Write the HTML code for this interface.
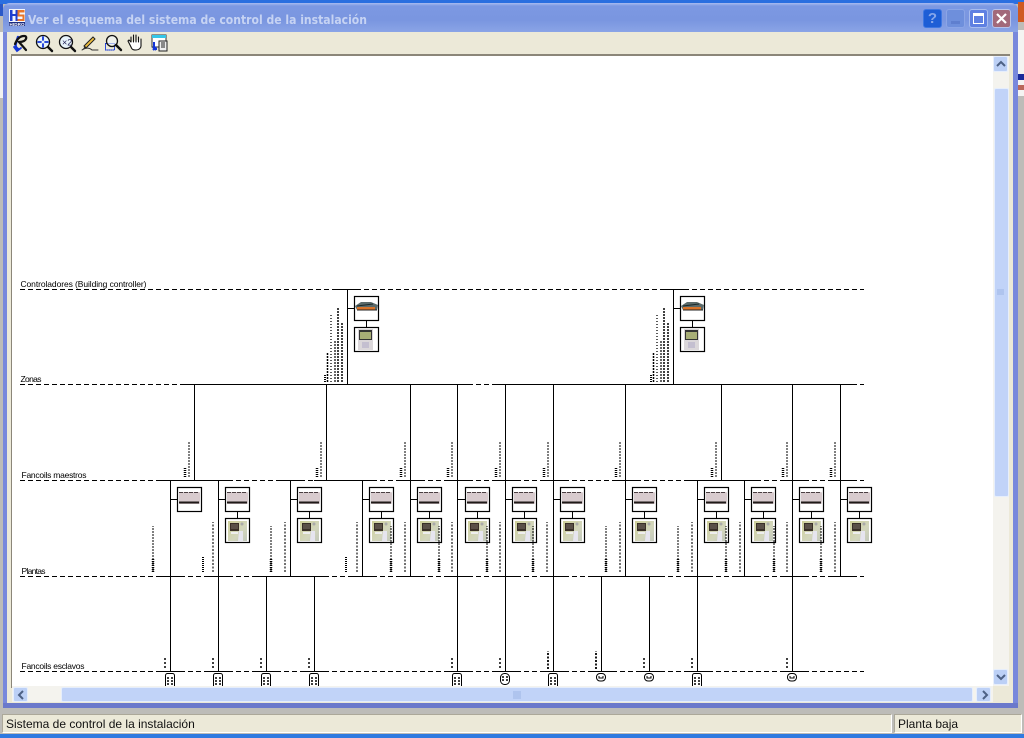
<!DOCTYPE html>
<html><head><meta charset="utf-8"><title>Ver el esquema del sistema de control de la instalación</title>
<style>
html,body{margin:0;padding:0;width:1024px;height:738px;overflow:hidden;background:#bdbcb8;font-family:"Liberation Sans",sans-serif}
.a{position:absolute}
#stage{position:absolute;left:0;top:0;width:1024px;height:738px;overflow:hidden}
.btn{position:absolute;width:19px;height:19px;border-radius:3px;border:1px solid #a9bdee;box-sizing:border-box}
.sb{position:absolute;background:#bcd0f6;border:1px solid #e6eefc;box-sizing:border-box;border-radius:2px}
.panel{position:absolute;top:714px;height:19px;background:#ece9d8;border:1px solid;border-color:#aca899 #fff #fff #aca899;box-sizing:border-box;font-size:12px;line-height:18px;color:#111;padding-left:3px;white-space:nowrap}
</style></head><body>
<div id="stage">
<div class="a" style="left:0;top:0;width:1024px;height:4px;background:#2a6fe0"></div>
<div class="a" style="left:0;top:32px;width:3px;height:66px;background:#f2f2f0"></div>
<div class="a" style="left:1018px;top:30px;width:6px;height:66px;background:#f4f4f2"></div>
<div class="a" style="left:1018px;top:74px;width:6px;height:6px;background:#1a2a9a"></div>
<div class="a" style="left:1018px;top:85px;width:6px;height:5px;background:#b9675a"></div>
<div class="a" style="left:1018px;top:2px;width:6px;height:20px;background:#cf5a22"></div>
<div class="a" style="left:0;top:4px;width:3px;height:12px;background:#2a58c8"></div>

<!-- window -->
<div class="a" style="left:3px;top:3px;width:1015px;height:705px;background:#7888dc;border-radius:7px 7px 0 0"></div>
<div class="a" style="left:3px;top:3px;width:1015px;height:29px;border-radius:7px 7px 0 0;background:linear-gradient(#a8bbf0 0,#7c98e2 3px,#7a96e0 60%,#8aa4e6 100%)"></div>
<div class="a" style="left:7px;top:32px;width:1006px;height:671px;background:#ece9d8"></div>
<div class="a" style="left:3px;top:703px;width:1015px;height:5px;background:#6b79cb"></div>
<div class="a" style="left:11px;top:54px;width:999px;height:2px;background:#8b8679"></div>
<div class="a" style="left:11px;top:54px;width:1px;height:634px;background:#8b8679"></div>
<div class="a" style="left:12px;top:56px;width:981px;height:630px;background:#fff"></div>
<div class="a" style="left:993px;top:56px;width:16px;height:630px;background:#f4f3ee"></div>
<div class="a" style="left:12px;top:686px;width:981px;height:16px;background:#f4f3ee"></div>

<!-- title -->
<svg class="a" style="left:0;top:0" width="1024" height="56" viewBox="0 0 1024 56">
<text x="28" y="24" font-family="'DejaVu Sans',sans-serif" font-weight="700" font-size="12" fill="#c6d3f3" textLength="339" lengthAdjust="spacingAndGlyphs">Ver el esquema del sistema de control de la instalación</text>
<rect x="9" y="9" width="16" height="17" fill="#f4f6fc"/>
<path d="M10 10h2.500v4h3v-4h2v11h-2v-5h-3v5H10z" fill="#1f3fd0"/>
<path d="M17.500 10h7v2.500h-5v2h5V21h-7v-2h5v-2.500h-5z" fill="#e8752a"/>
<rect x="9" y="22" width="16" height="4" fill="#1c2c80"/>
<text x="9.500" y="25.800" font-size="4.500" font-weight="700" fill="#fff" font-family="'Liberation Sans',sans-serif" textLength="15">HIDRO</text>
<!-- toolbar icons -->
<g fill="none" stroke-linecap="round">
<path d="M18 37l-2 6c-1 3 0 5 2 6" stroke="#1436d8" stroke-width="2.400"/>
<path d="M14 47l3 4 4-3" stroke="#1436d8" stroke-width="1.800"/>
<path d="M15 44c2-5 5-8 9-8 3 0 3 3 0 5-2 1-4 1-5 1l7 8" stroke="#111" stroke-width="2.200"/>
<circle cx="43" cy="42" r="6.500" stroke="#111" stroke-width="1.300" fill="#e8f4fb"/>
<path d="M48 47l4 4" stroke="#111" stroke-width="2.400"/>
<path d="M43 37v3M43 44v3M38 42h3M45 42h3" stroke="#1436d8" stroke-width="1.800"/>
<circle cx="66" cy="42" r="6.500" stroke="#111" stroke-width="1.300" fill="#e8f4fb"/>
<path d="M71 47l4 4" stroke="#111" stroke-width="2.400"/>
<path d="M84 46l9-9 2 2-9 9z" stroke="#222" stroke-width="1" fill="#f0c040"/>
<path d="M83 49l2-3 2 2z" fill="#222"/>
<path d="M82 50c4-3 8-2 10 0h6" stroke="#333" stroke-width="1"/>
<rect x="105.500" y="43.500" width="9" height="6.500" stroke="#1436d8" stroke-width="1" stroke-dasharray="1 1"/>
<circle cx="112" cy="41" r="5.500" stroke="#111" stroke-width="1.300" fill="#f4f9fc" fill-opacity=".6"/>
<path d="M116 45l5 5" stroke="#111" stroke-width="2.400"/>
<path d="M131 42v-5M133.500 42v-7M136 42v-7M138.500 42v-5M131 42l-2-2-1 1 3 6c1 3 3 3 5 3 3 0 5-2 5-4v-7" stroke="#111" stroke-width="1.100" fill="#fff"/>
</g>
<rect x="152" y="35" width="14" height="12" fill="#fff" stroke="#333"/>
<rect x="152" y="35" width="14" height="3" fill="#35c6e8"/>
<rect x="159" y="41" width="8" height="10" fill="#eee" stroke="#222"/>
<path d="M161 43h4M161 45h4M161 47h4" stroke="#222"/>
<path d="M154 42v7h3M156 47l-3 3M153 47l3 3" stroke="#1436d8" stroke-width="2" fill="none"/>
<text x="62" y="45.500" font-size="9" fill="#225" font-family="'Liberation Sans',sans-serif">×2</text>
</svg>

<!-- window buttons -->
<div class="btn" style="left:923px;top:9px;background:#1d5ed6;border-color:#3f78e2;color:#86a6ea;font:700 15px/17px 'Liberation Sans',sans-serif;text-align:center">?</div>
<div class="btn" style="left:946px;top:9px;background:#6e8fdc;border-color:#8ba5e6"><div class="a" style="left:4px;top:11px;width:9px;height:3px;background:#5f7fcf"></div></div>
<div class="btn" style="left:969px;top:9px;background:#5f80e2;border-color:#a9bdee"><div class="a" style="left:3px;top:3px;width:11px;height:11px;border:1px solid #fff;border-top-width:3px;box-sizing:border-box"></div></div>
<div class="btn" style="left:992px;top:9px;background:#a2697a;border-color:#b7c3ea"><svg class="a" style="left:2px;top:2px" width="13" height="13"><path d="M2 2l9 9M11 2l-9 9" stroke="#fff" stroke-width="2.200"/></svg></div>

<!-- diagram -->
<svg class="a" style="left:0;top:0" width="1024" height="738" viewBox="0 0 1024 738">
<defs>
<clipPath id="c"><rect x="12" y="56" width="981" height="630"/></clipPath>
<linearGradient id="th" x1="0" y1="0" x2="1" y2="1"><stop offset="0" stop-color="#cfd09a"/><stop offset=".6" stop-color="#d3d6bd"/><stop offset="1" stop-color="#c2c8bb"/></linearGradient>
<g id="m">
<rect x=".5" y=".5" width="24" height="24" fill="#fff" stroke="#000" stroke-width="1.200"/>
<rect x="2" y="5" width="21" height="12" rx="1" fill="#d8cbce"/>
<path d="M2 5.500h20" stroke="#4a3f42" stroke-width="1" stroke-dasharray="4 1"/>
<path d="M2 15.500h20" stroke="#1f1a18" stroke-width="2"/>
</g>
<g id="t">
<rect x=".5" y=".5" width="24" height="24" fill="#fff" stroke="#000" stroke-width="1.200"/>
<rect x="3" y="3" width="19" height="20" fill="url(#th)"/>
<rect x="5" y="5" width="9" height="8" fill="#3a3028"/>
<rect x="6" y="6" width="7" height="5" fill="#5a5048"/>
<path d="M14 13h4v10h-5z" fill="#e6e5ef"/>
<rect x="6" y="14" width="7" height="2" fill="#eee"/>
<circle cx="17" cy="6" r="1.500" fill="#aaa"/>
</g>
<g id="ctl">
<rect x=".5" y=".5" width="24" height="24" fill="#fff" stroke="#000" stroke-width="1.200"/>
<path d="M1 10l6-4h10l7 3-1 5H3z" fill="#5b6a6a"/>
<path d="M3 11h18v3H3z" fill="#d9742a"/>
<path d="M3 10l16-2" stroke="#1a2a2a"/>
<path d="M3 14h20" stroke="#222"/>
</g>
<g id="ts">
<rect x=".5" y=".5" width="24" height="24" fill="#fff" stroke="#000" stroke-width="1.200"/>
<rect x="4" y="2" width="15" height="21" fill="#dbd7da"/>
<rect x="5" y="3" width="13" height="10" fill="#333"/>
<rect x="6" y="5" width="11" height="7" fill="#a8ae76"/>
<rect x="8" y="15" width="7" height="6" fill="#c4bfd0"/>
</g>
<g id="lm" stroke="#000" fill="none">
<path d="M0 0v-36" stroke-width="1" stroke-dasharray="2 1"/>
<path d="M-4 0v-10" stroke-width="2.500" stroke-dasharray="1 1"/>
</g>
<g id="la" stroke="#000" fill="none">
<path d="M0 0v-46" stroke-width="1" stroke-dasharray="2 1"/>
<path d="M0 0v-14" stroke-width="2.500" stroke-dasharray="1 1"/>
</g>
<g id="lb" stroke="#000" fill="none">
<path d="M0 0v-50" stroke-width="1.100" stroke-dasharray="2 1.500"/>
</g>
<g id="lc" stroke="#000" fill="none"><path d="M0 0v-16" stroke-width="2" stroke-dasharray="1 1"/></g>
<g id="le" stroke="#000" fill="none"><path d="M0 0v-12" stroke-width="1.500" stroke-dasharray="2 2"/></g>
<g id="lf" stroke="#000" fill="none"><path d="M0 0v-18" stroke-width="1.800" stroke-dasharray="2 1.500"/></g>
<g id="tag"><rect x="-4.500" y="2.500" width="9" height="16" rx="2" fill="#fff" stroke="#000"/><path d="M-2 6v10M2 6v10" stroke="#000" stroke-width="1.500" stroke-dasharray="2 1"/></g>
<g id="tag2"><rect x="-4.500" y="2.500" width="9" height="11" rx="4" fill="#fff" stroke="#000"/><path d="M-2 5v5M2 5v5" stroke="#000" stroke-width="1.500" stroke-dasharray="2 1"/></g>
<g id="rnd"><rect x="-4.500" y="2.500" width="9" height="7.500" rx="3.500" fill="#fff" stroke="#000"/><path d="M-2 5v2h4V5" stroke="#000" fill="none"/></g>
<g id="zl" stroke="#000" fill="none">
<path d="M338 382v-75" stroke-width="1.500" stroke-dasharray="2 1"/>
<path d="M331 382v-67" stroke-width="1.300" stroke-dasharray="1 2"/>
<path d="M342 382v-59" stroke-width="1.500" stroke-dasharray="2 1"/>
<path d="M335 382v-42" stroke-width="1.200" stroke-dasharray="2 1"/>
<path d="M327.500 382v-30" stroke-width="1.500" stroke-dasharray="2 1"/>
<path d="M325 382v-7" stroke-width="2" stroke-dasharray="1 1"/>
</g>
</defs>
<g clip-path="url(#c)">
<g stroke="#000" fill="none" shape-rendering="crispEdges">
<path d="M20 289.500H864M20 384.500H864M20 480.500H864M20 576.500H864M20 671.500H864" stroke-dasharray="5 3"/>
<path d="M335 289.500h24M661 289.500h24M182 384.500h286M493 384.500h359"/>
<path d="M158 480.500h72M278 480.500h24M314 480.500h60M398 480.500h24M445 480.500h24M493 480.500h24M541 480.500h24M613 480.500h24M685 480.500h71M780 480.500h24M828 480.500h24"/>
<path d="M158 576.500h24M206 576.500h24M254 576.500h72M350 576.500h24M398 576.500h24M445 576.500h24M493 576.500h24M541 576.500h24M589 576.500h72M685 576.500h24M732 576.500h24M780 576.500h24M828 576.500h24"/>
<path d="M158 671.500h24M206 671.500h24M254 671.500h24M302 671.500h24M445 671.500h24M493 671.500h24M541 671.500h24M589 671.500h24M637 671.500h24M685 671.500h24M780 671.500h24"/>
<path d="M347.500 289v96M673.500 289v96"/>
<path d="M194.500 384v96M326.500 384v96M410.500 384v96M457.500 384v96M505.500 384v96M553.500 384v96M625.500 384v96M721.500 384v96M792.500 384v96M840.500 384v96"/>
<path d="M170.500 480v96M218.500 480v96M290.500 480v96M362.500 480v96M410.500 480v96M457.500 480v96M505.500 480v96M553.500 480v96M625.500 480v96M697.500 480v96M744.500 480v96M792.500 480v96M840.500 480v96"/>
<path d="M170.500 576v96M218.500 576v96M266.500 576v96M314.500 576v96M457.500 576v96M505.500 576v96M553.500 576v96M601.500 576v96M649.500 576v96M697.500 576v96M792.500 576v96"/>
<path d="M347 308.500h7M673 308.500h7M366.500 321v6M692.500 321v6"/>
<path d="M170 499.500h7M218 499.500h7M290 499.500h7M362 499.500h7M410 499.500h7M457 499.500h8M505 499.500h7M553 499.500h7M625 499.500h7M697 499.500h7M744 499.500h7M792 499.500h7M840 499.500h7"/>
<path d="M237.500 512v6M309.500 512v6M381.500 512v6M429.500 512v6M477.500 512v6M524.500 512v6M572.500 512v6M644.500 512v6M716.500 512v6M763.500 512v6M811.500 512v6M859.500 512v6"/>
</g>
<g font-family="'Liberation Sans',sans-serif" font-size="8.500" fill="#000" style="white-space:pre">
<text x="20.500" y="287" textLength="126" lengthAdjust="spacing">Controladores  (Building  controller)</text>
<text x="20.500" y="382" textLength="21" lengthAdjust="spacing">Zonas</text>
<text x="21.500" y="478" textLength="65" lengthAdjust="spacing">Fancoils  maestros</text>
<text x="21.500" y="574" textLength="24" lengthAdjust="spacing">Plantas</text>
<text x="21.500" y="669" textLength="63" lengthAdjust="spacing">Fancoils  esclavos</text>
</g>
<use href="#ctl" x="354" y="296"/><use href="#ts" x="354" y="327"/>
<use href="#ctl" x="680" y="296"/><use href="#ts" x="680" y="327"/>
<use href="#zl"/><use href="#zl" x="326"/>
<use href="#m" x="177" y="487"/>
<use href="#m" x="225" y="487"/><use href="#t" x="225" y="518"/>
<use href="#m" x="297" y="487"/><use href="#t" x="297" y="518"/>
<use href="#m" x="369" y="487"/><use href="#t" x="369" y="518"/>
<use href="#m" x="417" y="487"/><use href="#t" x="417" y="518"/>
<use href="#m" x="465" y="487"/><use href="#t" x="465" y="518"/>
<use href="#m" x="512" y="487"/><use href="#t" x="512" y="518"/>
<use href="#m" x="560" y="487"/><use href="#t" x="560" y="518"/>
<use href="#m" x="632" y="487"/><use href="#t" x="632" y="518"/>
<use href="#m" x="704" y="487"/><use href="#t" x="704" y="518"/>
<use href="#m" x="751" y="487"/><use href="#t" x="751" y="518"/>
<use href="#m" x="799" y="487"/><use href="#t" x="799" y="518"/>
<use href="#m" x="847" y="487"/><use href="#t" x="847" y="518"/>
<!-- zone-master labels -->
<use href="#lm" x="189" y="477"/><use href="#lm" x="321" y="477"/><use href="#lm" x="405" y="477"/><use href="#lm" x="452" y="477"/><use href="#lm" x="500" y="477"/><use href="#lm" x="548" y="477"/><use href="#lm" x="620" y="477"/><use href="#lm" x="716" y="477"/><use href="#lm" x="787" y="477"/><use href="#lm" x="835" y="477"/>
<!-- master-floor labels -->
<use href="#la" x="153" y="572"/><use href="#la" x="271" y="572"/><use href="#la" x="391" y="572"/><use href="#la" x="439" y="572"/><use href="#la" x="487" y="572"/><use href="#la" x="533" y="572"/><use href="#la" x="606" y="572"/><use href="#la" x="678" y="572"/><use href="#la" x="726" y="572"/><use href="#la" x="774" y="572"/><use href="#la" x="821" y="572"/>
<use href="#lb" x="213" y="572"/><use href="#lb" x="285" y="572"/><use href="#lb" x="357" y="572"/><use href="#lb" x="405" y="572"/><use href="#lb" x="452" y="572"/><use href="#lb" x="500" y="572"/><use href="#lb" x="547" y="572"/><use href="#lb" x="620" y="572"/><use href="#lb" x="692" y="572"/><use href="#lb" x="740" y="572"/><use href="#lb" x="787" y="572"/><use href="#lb" x="835" y="572"/>
<use href="#lc" x="203" y="572"/><use href="#lc" x="346" y="572"/>
<!-- slave labels -->
<use href="#le" x="165" y="668"/><use href="#le" x="213" y="668"/><use href="#le" x="261" y="668"/><use href="#le" x="309" y="668"/><use href="#le" x="452" y="668"/><use href="#le" x="500" y="668"/><use href="#lf" x="548" y="669"/><use href="#lf" x="596" y="669"/><use href="#le" x="644" y="668"/><use href="#le" x="692" y="668"/><use href="#le" x="787" y="668"/>
<use href="#tag" x="170" y="671"/><use href="#tag" x="218" y="671"/><use href="#tag" x="266" y="671"/><use href="#tag" x="314" y="671"/><use href="#tag" x="457" y="671"/><use href="#tag" x="553" y="671"/><use href="#tag" x="697" y="671"/>
<use href="#tag2" x="505" y="671"/><use href="#rnd" x="601" y="671"/><use href="#rnd" x="649" y="671"/><use href="#rnd" x="792" y="671"/>
</g>
</svg>

<!-- scrollbars -->
<div class="sb" style="left:993px;top:56px;width:15px;height:16px"></div>
<div class="sb" style="left:994px;top:88px;width:15px;height:409px;background:#c1d3f8"></div>
<div class="sb" style="left:993px;top:669px;width:15px;height:16px"></div>
<div class="sb" style="left:13px;top:687px;width:15px;height:15px"></div>
<div class="sb" style="left:61px;top:687px;width:912px;height:15px;background:#c1d3f8"></div>
<div class="sb" style="left:976px;top:687px;width:15px;height:15px"></div>
<svg class="a" style="left:0;top:0" width="1024" height="738" viewBox="0 0 1024 738" fill="none" stroke="#4d6185" stroke-width="2">
<path d="M997 66l4-4 4 4M997 675l4 4 4-4M23 691l-4 4 4 4M983 691l4 4-4 4"/>
<path d="M997 290h7M997 292h7M997 294h7M514 691v8M516 691v8M518 691v8M520 691v8" stroke="#9db5e4" stroke-width="1"/>
</svg>

<!-- status -->
<div class="a" style="left:0;top:708px;width:1024px;height:26px;background:#bdbcb8"></div>
<div class="panel" style="left:2px;width:890px">Sistema de control de la instalación</div>
<div class="panel" style="left:894px;width:128px">Planta baja</div>
<div class="a" style="left:0;top:734px;width:1024px;height:4px;background:#2f7ae0"></div>
</div>
</body></html>
